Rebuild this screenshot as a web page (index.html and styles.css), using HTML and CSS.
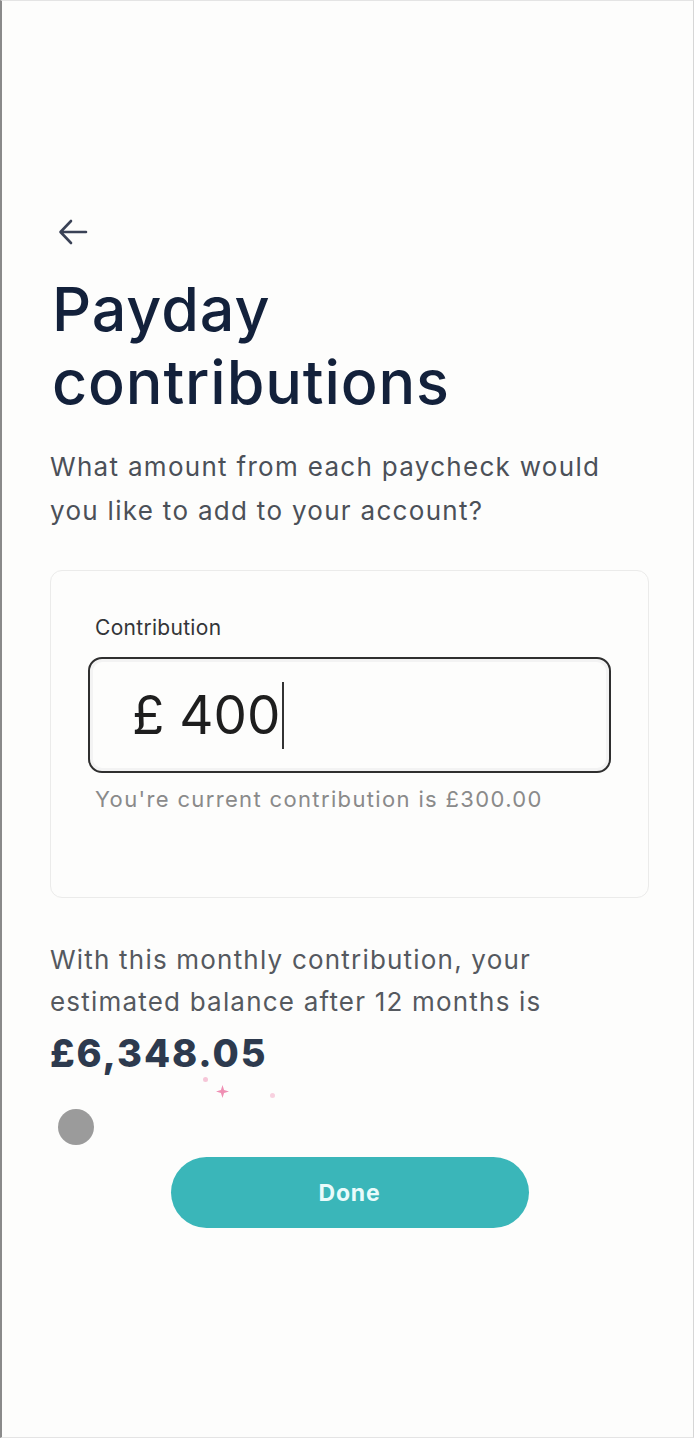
FILE: index.html
```html
<!DOCTYPE html>
<html lang="en">
<head>
<meta charset="utf-8">
<title>Payday contributions</title>
<link rel="stylesheet" href="styles.css">
</head>
<body>
<div class="screen">
  <button class="back" aria-label="Back">
    <svg width="32" height="28" viewBox="0 0 32 28" fill="none" stroke="#3a4256" stroke-width="2.6" stroke-linecap="round" stroke-linejoin="round"><path d="M29 14H4M14 3L3.5 14L14 25"/></svg>
  </button>
  <h1 class="title">Payday<br>contributions</h1>
  <p class="lead">What amount from each paycheck would you like to add to your account?</p>
  <section class="card">
    <label class="label">Contribution</label>
    <div class="field"><span class="value">£ 400</span><span class="caret"></span></div>
    <p class="hint">You're current contribution is £300.00</p>
  </section>
  <p class="estimate">With this monthly contribution, your estimated balance after 12 months is</p>
  <div class="amount-wrap">
    <div class="amount">£6,348.05</div>
    <span class="spark s1"></span><span class="spark s2"></span><span class="spark s3"></span>
  </div>
  <div class="dot"></div>
  <div class="actions"><button class="done">Done</button></div>
</div>
</body>
</html>
```

FILE: styles.css
```css
* { box-sizing: border-box; }
html, body { margin: 0; padding: 0; }
body {
  width: 694px;
  height: 1438px;
  background: #fdfdfc;
  font-family: Inter, "Noto Sans", sans-serif;
  overflow: hidden;
}
.screen {
  height: 1438px;
  border-left: 2px solid #8a8a8a;
  border-right: 1px solid #d6d6d6;
  border-top: 1px solid #e4e4e4;
  border-bottom: 1px solid #e4e4e4;
  padding: 215px 44px 0 48px;
  display: flex;
  flex-direction: column;
}
.back {
  align-self: flex-start;
  background: none;
  border: 0;
  padding: 0;
  margin-left: 7px;
  width: 32px;
  height: 32px;
  display: flex;
  align-items: center;
}
.title {
  margin: 25px 0 0 2px;
  font-size: 61px;
  font-weight: 500;
  line-height: 73px;
  letter-spacing: 0.9px;
  color: #13213b;
}
.lead {
  margin: 26px 0 0 0;
  font-size: 26px;
  line-height: 44px;
  letter-spacing: 1.3px;
  color: #4b5058;
  width: 600px;
}
.card {
  margin: 37px 0 0 0;
  height: 328px;
  border: 1.5px solid #ebebea;
  border-radius: 12px;
  padding: 44px 37px 0 37px;
  display: flex;
  flex-direction: column;
}
.label {
  font-size: 21px;
  color: #333538;
  margin-left: 7px;
  line-height: 26px;
  letter-spacing: 0.3px;
}
.field {
  margin-top: 16px;
  height: 116px;
  border: 2.5px solid #2f2f2f;
  border-radius: 14px;
  box-shadow: inset 0 0 0 3px #f3f3f3;
  display: flex;
  align-items: center;
  padding-left: 42px;
  background: #fdfdfc;
}
.value {
  font-size: 53px;
  color: #1e1e1e;
  font-weight: 400;
}
.caret {
  width: 1.5px;
  height: 67px;
  background: #333;
  margin-left: 2px;
}
.hint {
  margin: 12px 0 0 7px;
  font-size: 22px;
  color: #8a8a8a;
  line-height: 28px;
  letter-spacing: 1.35px;
}
.estimate {
  margin: 41px 0 0 0;
  font-size: 26px;
  line-height: 42px;
  letter-spacing: 1.2px;
  color: #55595f;
  width: 520px;
}
.amount-wrap { position: relative; margin: 7px 0 0 0; height: 79px; }
.amount {
  font-size: 38px;
  font-weight: 800;
  color: #2d3a4e;
  line-height: 46px;
  letter-spacing: 1.9px;
}
.spark { position: absolute; background: #ef8fb3; }
.s1 { left: 153px; top: 47px; width: 5px; height: 5px; opacity: .5; border-radius: 50%; }
.s2 { left: 166px; top: 55px; width: 13px; height: 13px; clip-path: polygon(50% 0, 62% 38%, 100% 50%, 62% 62%, 50% 100%, 38% 62%, 0 50%, 38% 38%); }
.s3 { left: 220px; top: 63px; width: 5px; height: 5px; opacity: .4; border-radius: 50%; }
.dot {
  margin: 0 0 0 8px;
  width: 36px;
  height: 36px;
  border-radius: 50%;
  background: #9b9b9b;
}
.actions { display: flex; justify-content: center; margin-top: 12px; }
.done {
  width: 358px;
  height: 71px;
  border: 0;
  border-radius: 36px;
  background: #3ab6b9;
  color: #e9fbfb;
  font-family: Inter, sans-serif;
  font-weight: 700;
  font-size: 23px;
  letter-spacing: 0.8px;
}
```
